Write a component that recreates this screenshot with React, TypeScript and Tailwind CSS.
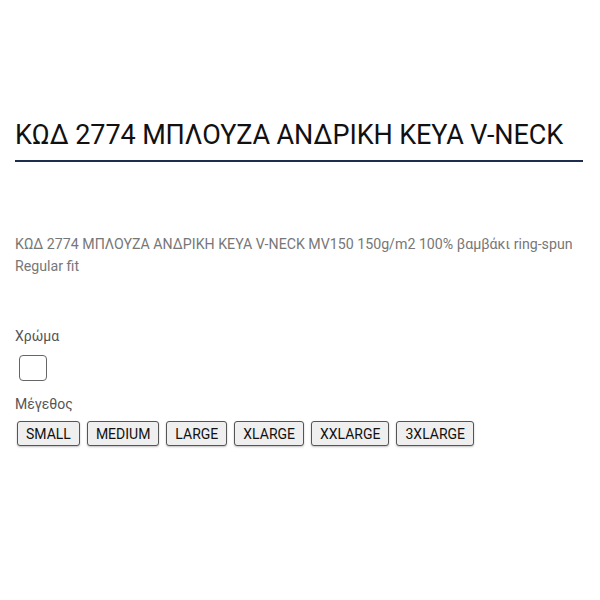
export default function App() {
  const sizes = ["SMALL", "MEDIUM", "LARGE", "XLARGE", "XXLARGE", "3XLARGE"];
  return (
    <div className="w-[600px] h-[600px] bg-white font-['Roboto',sans-serif] px-[15px] pt-[118px]">
      <h1 className="text-[27px] leading-[34px] text-[#111] tracking-[-0.1px]">
        ΚΩΔ 2774 ΜΠΛΟΥΖΑ ΑΝΔΡΙΚΗ ΚΕΥΑ V-NECK
      </h1>
      <div className="mt-[8px] mr-[2px] h-[2px] bg-[#1f2d4d]" />
      <p className="mt-[71px] text-[14.2px] leading-[22px] text-[#777]">
        ΚΩΔ 2774 ΜΠΛΟΥΖΑ ΑΝΔΡΙΚΗ ΚΕΥΑ V-NECK MV150 150g/m2 100% βαμβάκι ring-spun
        <br />
        Regular fit
      </p>
      <div className="mt-[49px] text-[14px] leading-[20px] text-[#555]">Χρώμα</div>
      <div className="mt-[9px] ml-[4px] w-[28px] h-[26px] rounded-[4px] border border-[#666]" />
      <div className="mt-[13px] text-[14px] leading-[20px] text-[#555]">Μέγεθος</div>
      <div className="mt-[7px] flex gap-[7px] pl-[2px]">
        {sizes.map((s) => (
          <button
            key={s}
            className="h-[25px] px-[8px] bg-[#efefef] border border-[#555] rounded-[3px] text-[14px] leading-[20px] text-[#111] shadow-[0_1px_2px_rgba(0,0,0,0.25)]"
          >
            {s}
          </button>
        ))}
      </div>
    </div>
  );
}
